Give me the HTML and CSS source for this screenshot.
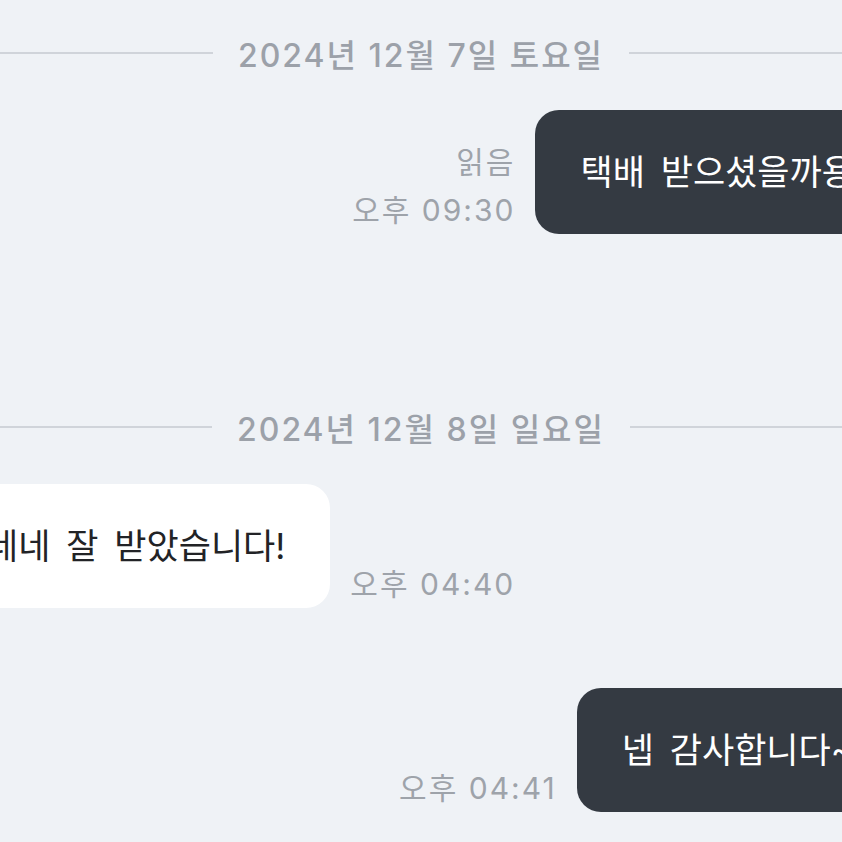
FILE: index.html
```html
<!DOCTYPE html>
<html lang="ko">
<head>
<meta charset="utf-8">
<link rel="stylesheet" href="styles.css">
</head>
<body>
<div class="chat">
  <div class="date first"><span class="line"></span><span class="date-text">2024년 12월 7일 토요일</span><span class="line"></span></div>
  <div class="row out r1">
    <div class="meta"><span>읽음</span><span>오후 09:30</span></div>
    <div class="bubble dark">택배 받으셨을까용?ㅎ</div>
  </div>
  <div class="date second"><span class="line"></span><span class="date-text">2024년 12월 8일 일요일</span><span class="line"></span></div>
  <div class="row in r2">
    <div class="bubble light">네네 잘 받았습니다!</div>
    <div class="meta"><span>오후 04:40</span></div>
  </div>
  <div class="row out r3">
    <div class="meta"><span>오후 04:41</span></div>
    <div class="bubble dark">넵 감사합니다~?ㅎ</div>
  </div>
</div>
</body>
</html>
```
FILE: styles.css
```css
html, body {
  margin: 0;
  padding: 0;
  background: #eff2f6;
  overflow: hidden;
}
.chat {
  width: 842px;
  height: 842px;
  overflow: hidden;
  padding-top: 33px;
  box-sizing: border-box;
  font-family: "Inter", "Noto Sans CJK KR", "Noto Sans", sans-serif;
}
.date {
  display: flex;
  align-items: center;
  gap: 25px;
  height: 40px;
}
.date .line {
  flex: 1;
  height: 2px;
  background: #d0d4da;
}
.date-text {
  font-size: 32px;
  font-weight: 500;
  letter-spacing: 2px;
  color: #9ca1a9;
  white-space: nowrap;
}
.date.second { margin-top: 173px; }
.row {
  display: flex;
  align-items: flex-end;
  gap: 20px;
  margin-top: 37px;
}
.row.out { justify-content: flex-end; margin-right: -107px; }
.row.in { justify-content: flex-start; margin-left: -59px; }
.row.r3 { margin-top: 80px; }
.bubble {
  padding: 40px 45px;
  line-height: 44px;
  font-size: 35px;
  word-spacing: 6px;
  border-radius: 24px;
  white-space: nowrap;
}
.bubble.dark { background: #343a42; color: #ffffff; }
.bubble.light { background: #ffffff; color: #222326; }
.meta {
  display: flex;
  flex-direction: column;
  align-items: flex-end;
  font-size: 30px;
  letter-spacing: 2px;
  line-height: 48px;
  color: #9ea3aa;
  white-space: nowrap;
}
.row.in .meta { align-items: flex-start; }
```
